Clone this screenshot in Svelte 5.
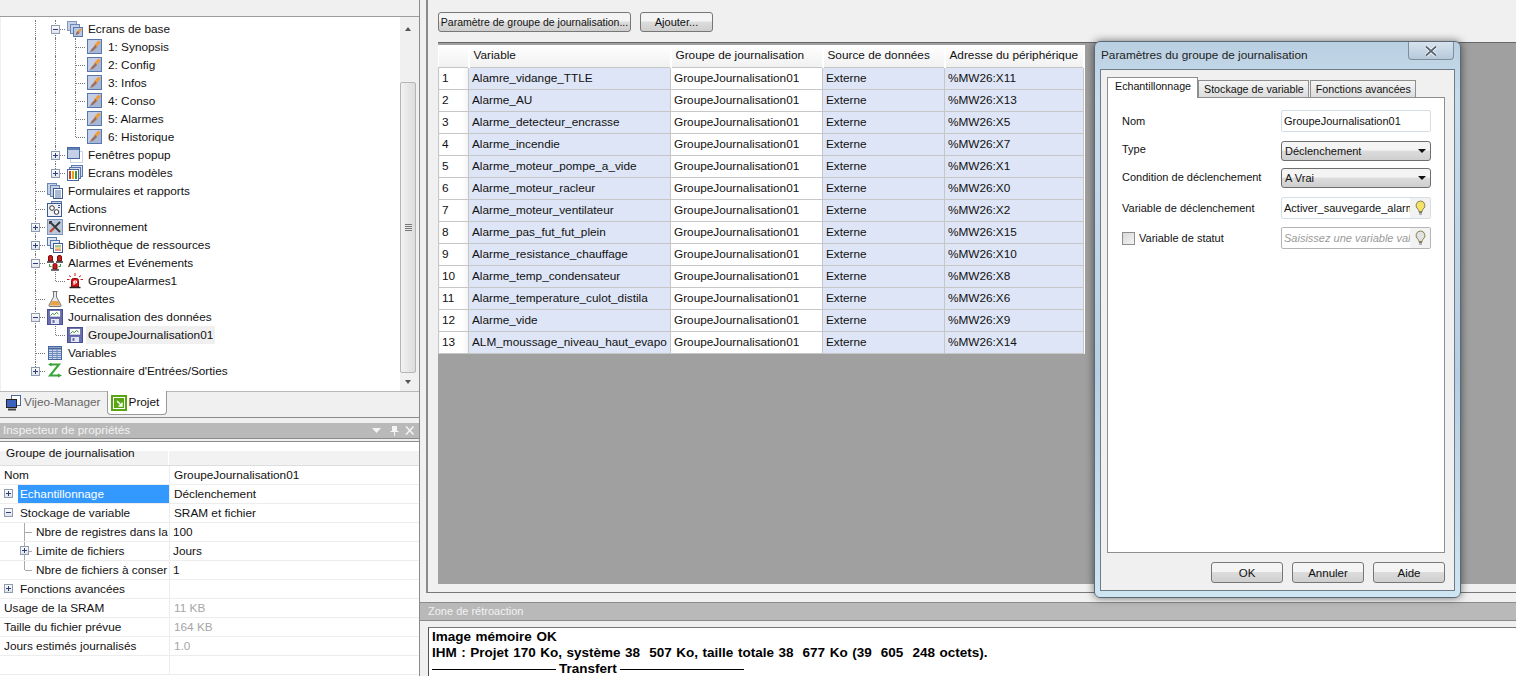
<script>
  const tree = [
    { box: 'minus', icon: 'stack', label: 'Ecrans de base', cells: ['v', 't'] },
    { icon: 'brush', label: '1: Synopsis', cells: ['v', 'v', 't'] },
    { icon: 'brush', label: '2: Config', cells: ['v', 'v', 't'] },
    { icon: 'brush', label: '3: Infos', cells: ['v', 'v', 't'] },
    { icon: 'brush', label: '4: Conso', cells: ['v', 'v', 't'] },
    { icon: 'brush', label: '5: Alarmes', cells: ['v', 'v', 't'] },
    { icon: 'brush', label: '6: Historique', cells: ['v', 'v', 'l'] },
    { box: 'plus', icon: 'popup', label: 'Fenêtres popup', cells: ['v', 't'] },
    { box: 'plus', icon: 'model', label: 'Ecrans modèles', cells: ['v', 'l'] },
    { icon: 'forms', label: 'Formulaires et rapports', cells: ['t'] },
    { icon: 'actions', label: 'Actions', cells: ['t'] },
    { box: 'plus', icon: 'tools', label: 'Environnement', cells: ['t'] },
    { box: 'plus', icon: 'library', label: 'Bibliothèque de ressources', cells: ['t'] },
    { box: 'minus', icon: 'alarms', label: 'Alarmes et Evénements', cells: ['t'] },
    { icon: 'beacon', label: 'GroupeAlarmes1', cells: ['v', 'l'] },
    { icon: 'flask', label: 'Recettes', cells: ['t'] },
    { box: 'minus', icon: 'floppy', label: 'Journalisation des données', cells: ['t'] },
    { icon: 'floppy', label: 'GroupeJournalisation01', cells: ['v', 'l'], selected: true },
    { icon: 'table', label: 'Variables', cells: ['t'] },
    { box: 'plus', icon: 'arrows', label: "Gestionnaire d'Entrées/Sorties", cells: ['l'] }
  ];

  const props = [
    { name: 'Nom', value: 'GroupeJournalisation01' },
    { name: 'Echantillonnage', value: 'Déclenchement', box: 'plus', indent: 1, active: true },
    { name: 'Stockage de variable', value: 'SRAM et fichier', box: 'minus', indent: 1 },
    { name: 'Nbre de registres dans la', value: '100', indent: 2, guide: 't' },
    { name: 'Limite de fichiers', value: 'Jours', box: 'plus', indent: 2, guide: 't' },
    { name: 'Nbre de fichiers à conser', value: '1', indent: 2, guide: 'l' },
    { name: 'Fonctions avancées', value: '', box: 'plus', indent: 1 },
    { name: 'Usage de la SRAM', value: '11 KB', muted: true },
    { name: 'Taille du fichier prévue', value: '164 KB', muted: true },
    { name: 'Jours estimés journalisés', value: '1.0', muted: true },
    { name: '', value: '' }
  ];

  const rows = [
    ['Alamre_vidange_TTLE', 'X11'],
    ['Alarme_AU', 'X13'],
    ['Alarme_detecteur_encrasse', 'X5'],
    ['Alarme_incendie', 'X7'],
    ['Alarme_moteur_pompe_a_vide', 'X1'],
    ['Alarme_moteur_racleur', 'X0'],
    ['Alarme_moteur_ventilateur', 'X2'],
    ['Alarme_pas_fut_fut_plein', 'X15'],
    ['Alarme_resistance_chauffage', 'X10'],
    ['Alarme_temp_condensateur', 'X8'],
    ['Alarme_temperature_culot_distila', 'X6'],
    ['Alarme_vide', 'X9'],
    ['ALM_moussage_niveau_haut_evapo', 'X14']
  ];
</script>

{#snippet expander(kind)}
  <span class="box">
    <svg width="9" height="9" viewBox="0 0 9 9">
      <path d="M2 4.500h5" stroke="#2b3f80" />
      {#if kind === 'plus'}<path d="M4.500 2v5" stroke="#2b3f80" />{/if}
    </svg>
  </span>
{/snippet}

{#snippet icon(name)}
  <svg class="ico" width="16" height="16" viewBox="0 0 16 16">
    {#if name === 'brush'}
      <rect x=".5" y=".5" width="14" height="14" fill="#c4cfe6" stroke="#5777ad" />
      <path d="M1 14 14 1v13z" fill="#a6b7d6" />
      <path d="M12.500 2.500 8 7.500" stroke="#ee9c3c" stroke-width="3.200" />
      <path d="M8.500 6 5 9.500 3 13l3.500-1.500L10 8z" fill="#a06e58" />
    {:else if name === 'stack'}
      <rect x=".5" y=".5" width="9" height="9" fill="#c8d2e6" stroke="#7f96c0" />
      <rect x="3.500" y="3.500" width="9" height="9" fill="#c8d2e6" stroke="#6a86b8" />
      <rect x="6.500" y="6.500" width="9" height="9" fill="#b9c6e0" stroke="#5777ad" />
      <path d="M14 8l-3 3.500" stroke="#ee9c3c" stroke-width="2.200" />
      <path d="M11 10 9.500 11.500 8.500 14.500l3-1.500 1-1.500z" fill="#a06e58" />
    {:else if name === 'popup'}
      <rect x="3.500" y="4.500" width="12" height="11" fill="none" stroke="#9aa7c4" stroke-dasharray="1 1" />
      <rect x=".5" y=".5" width="12" height="11" fill="#c5d0e6" stroke="#4a68a0" />
      <path d="M1 2h11" stroke="#5f7fb8" stroke-width="2" />
    {:else if name === 'model'}
      <rect x="4.500" y=".5" width="11" height="11" fill="#d4dcec" stroke="#5777ad" />
      <rect x="2.500" y="2.500" width="11" height="11" fill="#d4dcec" stroke="#5777ad" />
      <rect x=".5" y="4.500" width="11" height="11" fill="#fff" stroke="#4a68a0" />
      <path d="M3 6v8" stroke="#c8401c" stroke-width="2" />
      <path d="M6 6v8" stroke="#e8a020" stroke-width="2" />
      <path d="M9 6v8" stroke="#3a9a3a" stroke-width="2" />
    {:else if name === 'forms'}
      <rect x=".5" y=".5" width="9" height="11" fill="#c8d2e6" stroke="#6a86b8" />
      <rect x="3.500" y="2.500" width="9" height="11" fill="#c8d2e6" stroke="#6a86b8" />
      <rect x="6.500" y="5.500" width="9" height="10" fill="#fff" stroke="#3c5a90" />
      <path d="M8 8h6M8 10h6M8 12h6M8 14h6" stroke="#5777ad" />
    {:else if name === 'actions'}
      <rect x="4.500" y=".5" width="10" height="11" fill="#c8d2e6" stroke="#5777ad" />
      <rect x=".5" y="2.500" width="14" height="13" fill="#eef1f8" stroke="#3c5a90" />
      <circle cx="5" cy="7" r="2.300" fill="#fff" stroke="#333" />
      <circle cx="9.500" cy="11" r="2.300" fill="#fff" stroke="#333" />
      <path d="M11 4.500h2M11 6.500h2" stroke="#3c5a90" />
    {:else if name === 'tools'}
      <rect x=".5" y=".5" width="15" height="15" fill="#bcc8de" stroke="#7f96c0" />
      <path d="M3 3l10 10" stroke="#3a3a3a" stroke-width="2" />
      <path d="M13 3 7 9" stroke="#3a3a3a" stroke-width="2" />
      <path d="M7 9 3 13" stroke="#c04a30" stroke-width="2.400" />
      <path d="M2.500 5V2.500H5" fill="none" stroke="#333" />
    {:else if name === 'library'}
      <rect x=".5" y=".5" width="9" height="8" fill="#dfe6f3" stroke="#5777ad" />
      <rect x="3.500" y="3.500" width="9" height="8" fill="#dfe6f3" stroke="#5777ad" />
      <rect x="6.500" y="6.500" width="9" height="9" fill="#fff" stroke="#3c5a90" />
      <path d="M8 9h6" stroke="#3a9a3a" /><path d="M8 11h6" stroke="#e8a020" /><path d="M8 13h6" stroke="#c8401c" />
    {:else if name === 'alarms'}
      <path d="M1.500 2q0-1.500 1.500-1.500h1Q5.500.5 5.500 2v4h-4zM10.500 2q0-1.500 1.500-1.500h1q1.500 0 1.500 1.500v4h-4z" fill="#c91c1c" stroke="#7a0d0d" />
      <path d="M0 7h7M9 7h7" stroke="#333" stroke-width="1.400" />
      <path d="M6 10q0-1.500 1.500-1.500h1q1.500 0 1.500 1.500v4H6z" fill="#c91c1c" stroke="#7a0d0d" />
      <path d="M4 15h8" stroke="#333" stroke-width="1.400" />
      <path d="M2.500 9v2.500h2M13.500 9v2.500h-2" fill="none" stroke="#3a9a3a" />
    {:else if name === 'beacon'}
      <path d="M4.500 14V7.500q0-2 2-2h3q2 0 2 2V14z" fill="#d41414" stroke="#8a0c0c" />
      <path d="M2.500 14.500h11" stroke="#222" stroke-width="1.500" />
      <path d="M7 8h2.500v2H7zM7 8v4" fill="none" stroke="#fff" />
      <path d="M8 0v3M2 2.500l2 1.500M14 2.500l-2 1.500M0 6.500h2.500M16 6.500h-2.500" stroke="#c92020" />
    {:else if name === 'flask'}
      <path d="M5.500 .5h5M6.500 1v5L2 14q-.5 1.500 1 1.500h10q1.500 0 1-1.500L9.500 6V1" fill="#e6e9f0" stroke="#777" />
      <path d="M4.800 10h6.400l2.300 4.500H2.500z" fill="#e8a24a" />
    {:else if name === 'floppy'}
      <rect x=".5" y=".5" width="15" height="15" fill="#6a6fb0" stroke="#4a4f90" />
      <rect x="2.500" y="1.500" width="11" height="6.500" fill="#fff" stroke="#4a4f90" stroke-width=".6" />
      <path d="M3.500 6.500l2-2 2 1 2-2 2 1.500" fill="none" stroke="#2f8f3a" />
      <rect x="4" y="10" width="8" height="5" fill="#e6e8f2" />
      <rect x="5.500" y="11" width="2" height="3" fill="#6a6fb0" />
    {:else if name === 'table'}
      <rect x="1.500" y="1.500" width="13" height="13" fill="#cfd9ec" stroke="#4a68a0" />
      <path d="M2 3.500h12" stroke="#4a68a0" stroke-width="2" />
      <path d="M2 6.500h12M2 8.500h12M2 10.500h12M2 12.500h12M5.500 4v10M10 4v10" stroke="#6f8abc" />
    {:else if name === 'arrows'}
      <path d="M3 1.500h9l-9 11h8.500" fill="none" stroke="#3aa43a" stroke-width="2" />
      <path d="M4.500-.5v4L1 1.500zM11 10.500v4l4-2z" fill="#3aa43a" />
    {/if}
  </svg>
{/snippet}

{#snippet bulb(color)}
  <span class="bulb">
    <svg width="13" height="16" viewBox="0 0 13 16">
      <path d="M6.500 1a4.500 4.500 0 0 0-2.500 8.200c.6.500.8 1.300.8 2.300h3.400c0-1 .2-1.800.8-2.300A4.500 4.500 0 0 0 6.500 1z" fill={color} stroke="#8a8350" />
      <path d="M5 12.500h3M5 14h3" stroke="#777" stroke-width="1.200" />
    </svg>
  </span>
{/snippet}

<div class="screen">
  <div class="left">
    <div class="top-strip"></div>
    <div class="tree-panel">
      <div class="tree">
        {#each tree as item}
          <div class="node">
            {#each item.cells as c, i}
              <span class="cell {c}">
                {#if i === item.cells.length - 1 && item.box}{@render expander(item.box)}{/if}
              </span>
            {/each}
            {@render icon(item.icon)}
            <span class="node-label" class:selected={item.selected}>{item.label}</span>
          </div>
        {/each}
      </div>
      <div class="vscroll">
        <span class="arrow up"></span>
        <div class="thumb-space"><div class="thumb"><span class="grip"></span></div></div>
        <span class="arrow down"></span>
      </div>
    </div>
    <div class="dock-tabs">
      <div class="dock-tab">
        <svg width="16" height="16" viewBox="0 0 16 16">
          <rect x="5.500" y=".5" width="9" height="10" fill="#fff" stroke="#4a68a0" />
          <rect x=".5" y="4.500" width="10" height="8" fill="#3c62c0" stroke="#222" />
          <path d="M2 14.500h8" stroke="#444" stroke-width="2" />
        </svg>
        Vijeo-Manager
      </div>
      <div class="dock-tab on">
        <svg width="16" height="16" viewBox="0 0 16 16">
          <rect width="16" height="16" fill="#5aa514" />
          <rect x="2.500" y="2.500" width="11" height="11" fill="none" stroke="#fff" />
          <path d="M6 6l5 5M11 7.500V11H7.500" fill="none" stroke="#fff" stroke-width="1.400" />
        </svg>
        Projet
      </div>
    </div>
    <div class="dock-title">
      <span>Inspecteur de propriétés</span>
      <svg width="44" height="12" viewBox="0 0 44 12">
        <path d="M0 3h9L4.500 8z" fill="#f4f4f4" />
        <path d="M20 1h5v5h1.500v1H23v4h-1V7h-3.500V6H20z" fill="#f4f4f4" />
        <path d="M34 1.500l7.500 8M41.500 1.500l-7.500 8" stroke="#f4f4f4" stroke-width="1.600" />
      </svg>
    </div>
    <div class="props">
      <div class="prop-head"><span>Groupe de journalisation</span><i></i></div>
      {#each props as p}
        <div class="prop" class:muted={p.muted}>
          <div class="prop-name">
            {#if p.indent === 2}
              <span class="prop-guide {p.guide}">{#if p.box}{@render expander(p.box)}{/if}</span>
            {:else if p.box}
              <span class="prop-gutter">{@render expander(p.box)}</span>
            {/if}
            <span class="prop-text" class:active={p.active}>{p.name}</span>
          </div>
          <div class="prop-value" class:sub={p.indent === 2}>{p.value}</div>
        </div>
      {/each}
    </div>
  </div>

  <div class="right">
    <div class="work">
      <div class="toolbar">
        <button class="btn wide">Paramètre de groupe de journalisation...</button>
        <button class="btn add">Ajouter...</button>
      </div>
      <div class="canvas">
        <table>
          <thead>
            <tr><th></th><th>Variable</th><th>Groupe de journalisation</th><th>Source de données</th><th>Adresse du périphérique</th></tr>
          </thead>
          <tbody>
            {#each rows as r, i}
              <tr>
                <td class="idx">{i + 1}</td>
                <td class="blue">{r[0]}</td>
                <td>GroupeJournalisation01</td>
                <td class="blue">Externe</td>
                <td class="blue">%MW26:{r[1]}</td>
              </tr>
            {/each}
          </tbody>
        </table>
      </div>
    </div>
    <div class="dock-title feedback-title">Zone de rétroaction</div>
    <div class="feedback">
      <div>Image mémoire OK</div>
      <div class="pre">IHM : Projet 170 Ko, système 38  507 Ko, taille totale 38  677 Ko (39  605  248 octets).</div>
      <div class="transfer"><i></i>Transfert<i></i></div>
    </div>
  </div>

  <div class="dialog">
    <div class="dialog-title">
      <span>Paramètres du groupe de journalisation</span>
      <span class="close">
        <svg width="14" height="12" viewBox="0 0 14 12">
          <path d="M2 1.500l10 9M12 1.500l-10 9" stroke="#fff" stroke-width="3.600" />
          <path d="M2 1.500l10 9M12 1.500l-10 9" stroke="#5a6676" stroke-width="1.800" />
        </svg>
      </span>
    </div>
    <div class="dialog-body">
      <div class="tabs">
        <span class="tab on">Echantillonnage</span>
        <span class="tab">Stockage de variable</span>
        <span class="tab">Fonctions avancées</span>
      </div>
      <div class="page">
        <div class="form">
          <span class="lbl h22">Nom</span>
          <div class="input"><span class="val">GroupeJournalisation01</span></div>
          <span class="lbl h20 up2">Type</span>
          <div class="select"><span>Déclenchement</span><b></b></div>
          <span class="lbl h20 up1">Condition de déclenchement</span>
          <div class="select"><span>A Vrai</span><b></b></div>
          <span class="lbl h22">Variable de déclenchement</span>
          <div class="input"><span class="val">Activer_sauvegarde_alarm</span>{@render bulb('#f4e26a')}</div>
          <span class="lbl h22 check"><i></i>Variable de statut</span>
          <div class="input ghost"><span class="val">Saisissez une variable valide</span>{@render bulb('#e2e2e2')}</div>
        </div>
      </div>
      <div class="actions">
        <button class="btn dlg">OK</button>
        <button class="btn dlg">Annuler</button>
        <button class="btn dlg">Aide</button>
      </div>
    </div>
  </div>
</div>

<style>
  :global(body) {
    background: #f0f0f0;
    overflow: hidden;
  }
  .screen {
    position: relative;
    display: flex;
    width: 1516px;
    height: 676px;
    overflow: hidden;
    font: 11.800px/1 'Liberation Sans', Arial, sans-serif;
    color: #111;
  }

  /* left column */
  .left {
    width: 420px;
    flex: none;
    display: flex;
    flex-direction: column;
    border-right: 1px solid #8b8b8b;
    box-sizing: border-box;
  }
  .top-strip {
    height: 16px;
    flex: none;
    border-bottom: 1px solid #9c9c9c;
  }
  .tree-panel {
    height: 374px;
    flex: none;
    display: flex;
    padding-left: 1px;
    background: #f0f0f0;
    box-sizing: border-box;
  }
  .tree {
    width: 399px;
    height: 374px;
    padding-top: 3px;
    background: #fff;
    box-sizing: border-box;
  }
  .node {
    display: flex;
    align-items: center;
    height: 18px;
    padding-left: 24px;
  }
  .cell {
    position: relative;
    width: 20px;
    height: 18px;
    flex: none;
  }
  .cell.v::before,
  .cell.t::before,
  .cell.l::before {
    content: '';
    position: absolute;
    left: 10px;
    top: 0;
    bottom: 0;
    border-left: 1px dotted #777;
  }
  .cell.l::before {
    bottom: 9px;
  }
  .cell.t::after,
  .cell.l::after {
    content: '';
    position: absolute;
    left: 11px;
    right: 0;
    top: 9px;
    border-top: 1px dotted #777;
  }
  .box {
    position: absolute;
    left: 6px;
    top: 5px;
    z-index: 1;
    width: 9px;
    height: 9px;
    background: linear-gradient(#fff, #dde0e6);
    outline: 1px solid #8f9bb0;
    outline-offset: -1px;
    display: block;
  }
  .box svg {
    display: block;
  }
  .ico {
    flex: none;
    margin-left: 2px;
  }
  .node-label {
    margin-left: 3px;
    padding: 0 2px;
    height: 18px;
    line-height: 18px;
    white-space: nowrap;
  }
  .node-label.selected {
    background: #f0f0f0;
  }
  .vscroll {
    width: 16px;
    display: flex;
    flex-direction: column;
    align-items: center;
    background: #f0f0f0;
  }
  .arrow {
    flex: none;
    display: flex;
    align-items: center;
  }
  .arrow.up {
    height: 24px;
  }
  .arrow.down {
    height: 18px;
  }
  .arrow::before {
    content: '';
    border: 3px solid transparent;
  }
  .arrow.up::before {
    border-bottom: 4px solid #555;
    border-top: 0;
  }
  .arrow.down::before {
    border-top: 4px solid #555;
    border-bottom: 0;
  }
  .thumb-space {
    flex: 1;
    width: 100%;
    padding-top: 41px;
    box-sizing: border-box;
  }
  .thumb {
    height: 100%;
    background: linear-gradient(90deg, #f2f2f2, #dcdcdc);
    border: 1px solid #b5b5b5;
    border-radius: 2px;
    display: flex;
    align-items: center;
    justify-content: center;
    box-sizing: border-box;
  }
  .grip {
    width: 7px;
    height: 7px;
    background: repeating-linear-gradient(#777 0 1px, #e8e8e8 1px 2px);
  }
  .dock-tabs {
    flex: none;
    display: flex;
    align-items: flex-start;
    padding-left: 6px;
    border-bottom: 1px solid #8b8b8b;
    border-top: 1px solid #b8b8b8;
    height: 25px;
  }
  .dock-tab {
    display: flex;
    align-items: center;
    gap: 2px;
    height: 22px;
    padding-right: 6px;
    color: #666;
  }
  .dock-tab.on {
    color: #111;
    background: #fff;
    height: 23px;
    padding: 0 7px 0 3px;
    margin-top: -1px;
    border: 1px solid #999;
    border-top: 0;
    border-radius: 0 0 4px 4px;
  }
  .dock-title {
    display: flex;
    align-items: center;
    justify-content: space-between;
    height: 16px;
    margin-top: 5px;
    padding: 1px 3px 0;
    box-sizing: border-box;
    flex: none;
    background: #b9b9b9;
    color: #f2f2f2;
    border-bottom: 1px solid #8b8b8b;
  }
  .props {
    flex: 1;
    margin-top: 2px;
    background: #fff;
    border-top: 1px solid #8b8b8b;
  }
  .prop-head {
    display: flex;
    height: 23px;
    background: linear-gradient(#fff 0 9px, #f2f2f2 9px);
    border-bottom: 1px solid #dedede;
  }
  .prop-head span {
    width: 169px;
    padding: 6px 0 0 6px;
    box-sizing: border-box;
    border-right: 1px solid #fff;
  }
  .prop {
    display: flex;
    height: 19px;
    border-bottom: 1px solid #ededed;
    box-sizing: border-box;
  }
  .prop-name {
    width: 170px;
    flex: none;
    display: flex;
    align-items: stretch;
    box-sizing: border-box;
    border-right: 1px solid #ededed;
    white-space: nowrap;
    overflow: hidden;
  }
  .prop-gutter {
    position: relative;
    width: 18px;
    flex: none;
  }
  .prop-gutter .box {
    left: 4px;
    top: 4px;
  }
  .prop-guide {
    position: relative;
    width: 34px;
    flex: none;
  }
  .prop-guide::before {
    content: '';
    position: absolute;
    left: 24px;
    top: 0;
    bottom: 0;
    border-left: 1px solid #aaa;
  }
  .prop-guide.l::before {
    bottom: 9px;
  }
  .prop-guide::after {
    content: '';
    position: absolute;
    left: 25px;
    width: 7px;
    top: 9px;
    border-top: 1px solid #aaa;
  }
  .prop-guide .box {
    left: 20px;
    top: 4px;
  }
  .prop-text {
    flex: 1;
    padding-left: 2px;
    line-height: 18px;
    overflow: hidden;
  }
  .prop-name:not(:has(.prop-gutter, .prop-guide)) .prop-text {
    padding-left: 4px;
  }
  .prop-text.active {
    background: #3399ff;
    color: #fff;
  }
  .prop-value {
    padding-left: 4px;
    line-height: 18px;
  }
  .prop-value.sub {
    padding-left: 3px;
  }
  .muted .prop-value {
    color: #a6a6a6;
  }

  /* right column */
  .right {
    flex: 1;
    display: flex;
    flex-direction: column;
    min-width: 0;
  }
  .work {
    height: 593px;
    flex: none;
    margin-left: 6px;
    padding-left: 10px;
    border-left: 2px solid #8b8b8b;
    border-bottom: 1px solid #777;
    box-sizing: border-box;
    display: flex;
    flex-direction: column;
  }
  .toolbar {
    height: 42px;
    flex: none;
    display: flex;
    gap: 9px;
    padding-top: 12px;
    box-sizing: border-box;
  }
  .btn {
    height: 20px;
    padding: 0;
    font: 11px 'Liberation Sans', sans-serif;
    color: #111;
    white-space: nowrap;
    background: linear-gradient(#f4f4f4 0 45%, #dcdcdc 50%, #cfcfcf);
    border: 1px solid #777;
    border-radius: 3px;
  }
  .btn.wide {
    width: 193px;
    font-size: 10.500px;
  }
  .btn.add {
    width: 73px;
  }
  .canvas {
    flex: 1;
    margin-bottom: 8px;
    padding-top: 2px;
    background: #a0a0a0;
    border-top: 1px solid #666;
  }
  table {
    table-layout: fixed;
    width: 645px;
    border-collapse: collapse;
    background: #fff;
  }
  th:nth-child(1) { width: 30px; }
  th:nth-child(2) { width: 202px; }
  th:nth-child(3) { width: 152px; }
  th:nth-child(4) { width: 122px; }
  th:nth-child(5) { width: 139px; }
  th,
  td {
    box-sizing: border-box;
    height: 22px;
    white-space: nowrap;
  }
  th {
    padding: 1px 0 0 4px;
    font-weight: 400;
    text-align: left;
    background: linear-gradient(#fff, #f1f1f1);
    border-right: 2px solid #fff;
  }
  td {
    padding: 1px 0 0 3px;
    border: 1px solid #c6c6c6;
    overflow: hidden;
  }
  td.blue {
    background: #dde5f6;
  }
  td.idx {
    background: linear-gradient(90deg, #fff 80%, #f2f2f2);
  }
  .feedback-title {
    margin: 9px 0 0 0;
    height: 19px;
    border-top: 1px solid #8b8b8b;
    padding: 0 3px 0 8px;
    justify-content: flex-start;
    font-size: 11px;
  }
  .feedback {
    flex: 1;
    margin: 6px 0 0 8px;
    padding: 1px 0 0 3px;
    background: #fff;
    border-left: 1px solid #555;
    border-top: 1px solid #777;
    font-size: 13.500px;
    font-weight: 700;
    line-height: 16px;
    word-spacing: 0.800px;
    color: #000;
  }
  .pre {
    white-space: pre;
  }
  .transfer {
    display: flex;
    align-items: center;
    gap: 3px;
  }
  .transfer i {
    width: 124px;
    border-top: 1px solid #000;
  }

  /* dialog */
  .dialog {
    position: absolute;
    left: 1094px;
    top: 41px;
    width: 367px;
    height: 557px;
    padding: 0 5px 6px;
    box-sizing: border-box;
    display: flex;
    flex-direction: column;
    background: linear-gradient(#b9d0e2, #c9dcec 10%, #b7cfe4 60%, #cfe5f2);
    border: 1px solid #5b6a77;
    border-radius: 6px;
    box-shadow: 0 0 9px rgba(0, 0, 0, 0.55);
  }
  .dialog-title {
    height: 27px;
    flex: none;
    display: flex;
    justify-content: space-between;
    padding-left: 1px;
    margin-right: 1px;
    font: 11.800px/27px 'Liberation Sans', sans-serif;
    color: #222;
  }
  .close {
    display: flex;
    align-items: center;
    justify-content: center;
    width: 46px;
    height: 18px;
    background: linear-gradient(#d7e3ee, #b6c9da);
    border: 1px solid #7f8e9c;
    border-top: 0;
    border-radius: 0 0 4px 4px;
    box-sizing: border-box;
  }
  .dialog-body {
    flex: 1;
    display: flex;
    flex-direction: column;
    min-height: 0;
    padding: 7px 9px 7px 6px;
    background: #f0f0f0;
    border: 1px solid #6f7c88;
    font-size: 11px;
  }
  .tabs {
    display: flex;
    height: 20px;
    flex: none;
    align-items: flex-end;
    font-size: 10.700px;
  }
  .tab {
    height: 17px;
    padding: 0 4px 0 5px;
    line-height: 16px;
    margin-right: 1px;
    white-space: nowrap;
    background: linear-gradient(#f5f5f5, #dcdcdc);
    border: 1px solid #8e8e8e;
    border-bottom: 0;
    box-sizing: border-box;
  }
  .tab.on {
    width: 91px;
    height: 21px;
    position: relative;
    top: 1px;
    padding: 0 0 0 7px;
    line-height: 17px;
    margin-right: 0;
    background: #fff;
  }
  .page {
    flex: 1;
    background: #fff;
    border: 1px solid #8e8e8e;
    padding-top: 12px;
    min-height: 0;
  }
  .form {
    display: grid;
    grid-template-columns: 159px 150px;
    grid-template-rows: 31px 27px 29px 30px 22px;
    align-items: start;
    padding-left: 14px;
  }
  .lbl {
    display: flex;
    align-items: center;
    white-space: nowrap;
  }
  .h22 {
    height: 22px;
  }
  .h20 {
    height: 20px;
  }
  .up2 {
    margin-top: -2px;
  }
  .up1 {
    margin-top: -1px;
  }
  .input,
  .select {
    display: flex;
    align-items: center;
    justify-content: space-between;
    box-sizing: border-box;
    overflow: hidden;
    white-space: nowrap;
  }
  .input {
    height: 22px;
    padding-left: 2px;
    background: #fff;
    border: 1px solid #d5dde6;
    border-radius: 2px;
  }
  .val {
    flex: 1;
    min-width: 0;
    overflow: hidden;
  }
  .ghost {
    border-color: #b5b5b5;
    color: #999;
    font-style: italic;
  }
  .select {
    height: 20px;
    padding: 0 4px 0 3px;
    background: linear-gradient(#f4f4f4 0 45%, #dcdcdc 50%, #cfcfcf);
    border: 1px solid #6e6e6e;
    border-radius: 3px;
  }
  .select b {
    border: 4px solid transparent;
    border-top: 4px solid #111;
    border-bottom: 0;
  }
  .bulb {
    flex: none;
    width: 20px;
    height: 100%;
    display: flex;
    align-items: center;
    justify-content: center;
    background: #f2f2f2;
  }
  .bulb svg {
    display: block;
  }
  .check {
    gap: 4px;
  }
  .check i {
    width: 13px;
    height: 13px;
    background: linear-gradient(135deg, #d8d8d8, #f4f4f4);
    border: 1px solid #8e8e8e;
    box-sizing: border-box;
  }
  .actions {
    height: 30px;
    flex: none;
    display: flex;
    justify-content: flex-end;
    align-items: flex-end;
    gap: 9px;
  }
  .btn.dlg {
    width: 72px;
    height: 21px;
    font-size: 11.500px;
  }
</style>
